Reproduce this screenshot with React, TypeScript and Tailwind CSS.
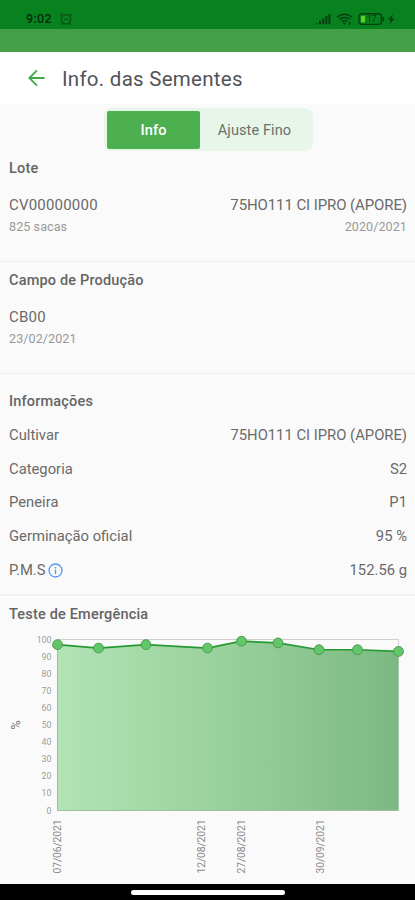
import clsx from "clsx";

const infos = [
  { label: "Cultivar", value: "75HO111 CI IPRO (APORE)" },
  { label: "Categoria", value: "S2" },
  { label: "Peneira", value: "P1" },
  { label: "Germinação oficial", value: "95 %" },
  { label: "P.M.S", value: "152.56 g", hint: true },
];

const points = [
  { x: 57.5, value: 97 },
  { x: 98.5, value: 95 },
  { x: 146, value: 97 },
  { x: 207.5, value: 95 },
  { x: 241.5, value: 99 },
  { x: 278, value: 98 },
  { x: 319, value: 94 },
  { x: 357.5, value: 94 },
  { x: 398.5, value: 93 },
];

const dates = [
  { x: 57.5, label: "07/06/2021" },
  { x: 201.5, label: "12/08/2021" },
  { x: 241.5, label: "27/08/2021" },
  { x: 320.5, label: "30/09/2021" },
];

const ticks = [0, 10, 20, 30, 40, 50, 60, 70, 80, 90, 100];

const chartTop = 11.5;
const chartBottom = 182.5;
const toY = (value: number) =>
  chartBottom - (value / 100) * (chartBottom - chartTop);

function StatusBar() {
  return (
    <div className="h-[29px] bg-[#07821f] flex items-end justify-between pl-[26px] pr-[18px] pb-[2px] text-[#082c0b]">
      <div className="flex items-center gap-[7px] h-4">
        <span className="text-[12.5px] leading-4 font-medium tracking-[0.3px]">
          9:02
        </span>
        <svg width="14" height="14" viewBox="0 0 14 14" fill="none" stroke="#0b4a14" strokeWidth="1.1">
          <circle cx="7" cy="7.3" r="4.7" />
          <path d="M1 3.6 3.4 1.4M13 3.6 10.6 1.4M3.6 11.2 2.4 12.8M10.4 11.2l1.2 1.6M5 7.3h4" />
        </svg>
      </div>
      <div className="flex items-center h-4">
        <svg width="82" height="14" viewBox="0 0 82 14" fill="#083d10">
          <path d="M0 12.2h3v-1.4L0 12.2ZM4 12.2h2V8.7H4ZM7.2 12.2h2V6.4h-2ZM10.4 12.2h2V4h-2ZM13.4 12.2h2V2h-2Z" />
          <g fill="none" stroke="#083d10" strokeWidth="1.5">
            <path d="M22 5.1Q29.5-.7 37 5.1" />
            <path d="M24.3 7.4Q29.5 3.4 34.7 7.4" />
            <path d="M26.6 9.5Q29.5 7.4 32.4 9.5" />
          </g>
          <path d="M27.8 10.7h3.4L29.5 12.8ZM34 9.8h1.6v3H34Z" />
          <rect x="44" y="1.8" width="22.5" height="10.6" rx="2.8" fill="none" stroke="#083d10" strokeWidth="1.4" />
          <path d="M67.5 5h1.6v4.2h-1.6Z" />
          <rect x="46" y="3.7" width="4" height="6.8" rx="1" fill="#5bd422" />
          <text x="52" y="10.2" fontSize="8.5">17</text>
          <path d="M77.8 2.3 73 8h2.6l-1 4.2L79.5 6.4h-2.7Z" />
        </svg>
      </div>
    </div>
  );
}

function Header() {
  return (
    <header className="h-[52px] bg-white flex items-center pl-[28px] gap-[16px]">
      <svg width="18" height="18" viewBox="0 0 18 18" fill="none" stroke="#43a84a" strokeWidth="1.8">
        <path d="M16.6 9H1.6M9 1.3 1.3 9 9 16.7" />
      </svg>
      <h1 className="pt-px text-[20.5px] leading-6 tracking-[0.27px] text-[#525358]">
        Info. das Sementes
      </h1>
    </header>
  );
}

function Tabs() {
  const tabs = ["Info", "Ajuste Fino"];

  return (
    <div className="mt-1 ml-[104px] w-[209px] h-[43px] rounded-lg bg-[#e8f5e9] p-[3px] flex items-center">
      {tabs.map((tab, i) => (
        <button
          key={tab}
          className={clsx(
            "h-[38px] pt-0.5 text-[14.5px] tracking-[0.1px]",
            i === 0
              ? "w-[93px] rounded-[2px] bg-[#4caf50] text-white font-medium"
              : "w-[109px] text-[#69726a]"
          )}
        >
          {tab}
        </button>
      ))}
    </div>
  );
}

function Title({ children }: { children: string }) {
  return (
    <h2 className="text-[14.5px] leading-5 font-medium tracking-[0.18px] text-[#656565]">
      {children}
    </h2>
  );
}

function EmergenceChart() {
  const line = points.map((p) => `${p.x},${toY(p.value)}`).join(" ");

  return (
    <svg width="415" height="256" viewBox="0 0 415 256" className="block">
      <defs>
        <linearGradient id="area" x1="0" x2="1" y1="0" y2="0">
          <stop offset="0" stopColor="#b2e4b5" />
          <stop offset="0.5" stopColor="#98d09c" />
          <stop offset="1" stopColor="#7cb982" />
        </linearGradient>
      </defs>
      <path d={`M57.5 ${chartTop}H398.5V${chartBottom}`} fill="none" stroke="#cfcfd1" />
      <polygon
        points={`57.5,${chartBottom} ${line} 398.5,${chartBottom}`}
        fill="url(#area)"
      />
      <path d={`M57.5 ${chartTop}V${chartBottom}H398.5`} fill="none" stroke="#9dbfa0" />
      <polyline points={line} fill="none" stroke="#269a30" strokeWidth="1.7" />
      {points.map((p) => (
        <circle key={p.x} cx={p.x} cy={toY(p.value)} r="4.9" fill="#61c768" stroke="#4c9c52" />
      ))}
      {ticks.map((tick) => (
        <text key={tick} x="51.5" y={toY(tick) + 3} fontSize="8.8" textAnchor="end" fill="#9c9c9c">
          {tick}
        </text>
      ))}
      {dates.map((date) => (
        <text
          key={date.label}
          transform={`translate(${date.x + 3.5} 245.5) rotate(-90)`}
          fontSize="10.3"
          textLength="54"
          fill="#8c8c8c"
        >
          {date.label}
        </text>
      ))}
      <text transform="translate(19.5 97) rotate(-90)" fontSize="13" textAnchor="middle" fill="#707070">
        %
      </text>
    </svg>
  );
}

export default function App() {
  return (
    <div className="w-full h-[900px] overflow-hidden flex flex-col bg-[#fafafa] font-['Roboto',sans-serif] text-[#6a6a6a]">
      <StatusBar />
      <div className="h-[23px] bg-[#43a047]" />
      <Header />
      <Tabs />

      <section className="h-[111px] px-[9px] pt-[8px] border-b border-[#efefef]">
        <Title>Lote</Title>
        <div className="mt-[16px] flex justify-between text-[15px] leading-5">
          <span className="tracking-[0.2px]">CV00000000</span>
          <span className="-mr-px tracking-[-0.1px]">75HO111 CI IPRO (APORE)</span>
        </div>
        <div className="mt-[2px] flex justify-between text-[12.5px] leading-5 text-[#999]">
          <span className="tracking-[0.1px]">825 sacas</span>
          <span className="-mr-px tracking-[0.1px]">2020/2021</span>
        </div>
      </section>

      <section className="h-[112px] px-[9px] pt-[9px] border-b border-[#efefef]">
        <Title>Campo de Produção</Title>
        <p className="mt-[16px] text-[15px] leading-5 tracking-[0.2px]">CB00</p>
        <p className="mt-[2px] text-[12.5px] leading-5 tracking-[0.1px] text-[#999]">
          23/02/2021
        </p>
      </section>

      <section className="h-[222px] px-[9px] pt-[18px] border-b-2 border-[#f1f1f1]">
        <Title>Informações</Title>
        <ul className="mt-[6px]">
          {infos.map((info) => (
            <li
              key={info.label}
              className="h-[33.8px] flex items-center justify-between text-[14.8px] leading-5"
            >
              <span className="flex items-center gap-[2px]">
                {info.label}
                {info.hint && (
                  <svg width="15" height="15" viewBox="0 0 15 15" fill="none" stroke="#5796ea" strokeWidth="1.3">
                    <circle cx="7.5" cy="7.5" r="6.5" />
                    <path d="M7.5 6.6v4.4M7.5 4v1.4" />
                  </svg>
                )}
              </span>
              <span className="-mr-px">{info.value}</span>
            </li>
          ))}
        </ul>
      </section>

      <section className="h-[288px]">
        <div className="h-[32px] px-[9px] pt-[9px]">
          <Title>Teste de Emergência</Title>
        </div>
        <EmergenceChart />
      </section>

      <div className="h-[16px] shrink-0 bg-black flex items-start justify-center pt-[6px]">
        <div className="w-[154px] h-[5px] rounded-full bg-white" />
      </div>
    </div>
  );
}
